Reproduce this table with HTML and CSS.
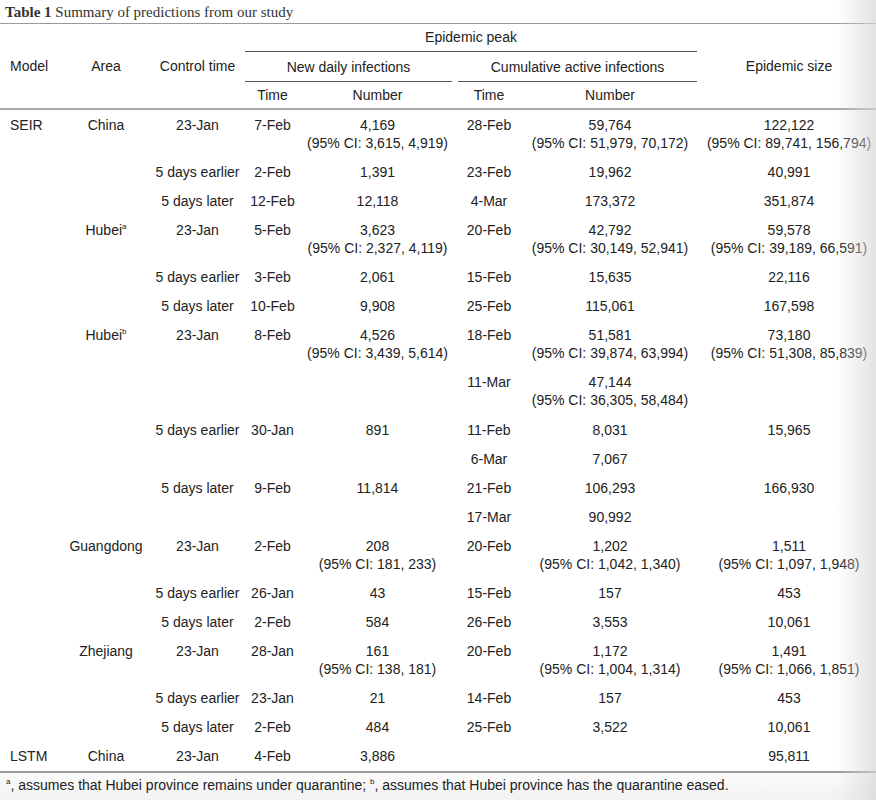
FILE: index.html
```html
<!DOCTYPE html>
<html>
<head>
<meta charset="utf-8">
<link rel="stylesheet" href="styles.css">
</head>
<body>
<div class="page">
  <div class="caption"><b>Table 1</b> Summary of predictions from our study</div>
  <table class="tbl">
    <colgroup>
      <col class="c-model"><col class="c-area"><col class="c-ctrl"><col class="c-t1"><col class="c-n1"><col class="c-t2"><col class="c-n2"><col class="c-size">
    </colgroup>
    <thead>
      <tr class="h1">
        <th rowspan="3" class="left">Model</th>
        <th rowspan="3">Area</th>
        <th rowspan="3">Control time</th>
        <th colspan="4" class="span-line">Epidemic peak</th>
        <th rowspan="3" class="size">Epidemic size</th>
      </tr>
      <tr class="h2">
        <th colspan="2" class="sub sub-l"><div class="sub-in">New daily infections</div></th>
        <th colspan="2" class="sub sub-r"><div class="sub-in">Cumulative active infections</div></th>
      </tr>
      <tr class="h3">
        <th>Time</th><th>Number</th><th>Time</th><th>Number</th>
      </tr>
    </thead>
    <tbody>
      <tr class="first"><td class="left">SEIR</td><td>China</td><td>23-Jan</td><td>7-Feb</td><td>4,169<br>(95% CI: 3,615, 4,919)</td><td>28-Feb</td><td>59,764<br>(95% CI: 51,979, 70,172)</td><td class="size">122,122<br>(95% CI: 89,741, 156,794)</td></tr>
      <tr><td></td><td></td><td>5 days earlier</td><td>2-Feb</td><td>1,391</td><td>23-Feb</td><td>19,962</td><td class="size">40,991</td></tr>
      <tr><td></td><td></td><td>5 days later</td><td>12-Feb</td><td>12,118</td><td>4-Mar</td><td>173,372</td><td class="size">351,874</td></tr>
      <tr><td></td><td>Hubei<sup>a</sup></td><td>23-Jan</td><td>5-Feb</td><td>3,623<br>(95% CI: 2,327, 4,119)</td><td>20-Feb</td><td>42,792<br>(95% CI: 30,149, 52,941)</td><td class="size">59,578<br>(95% CI: 39,189, 66,591)</td></tr>
      <tr><td></td><td></td><td>5 days earlier</td><td>3-Feb</td><td>2,061</td><td>15-Feb</td><td>15,635</td><td class="size">22,116</td></tr>
      <tr><td></td><td></td><td>5 days later</td><td>10-Feb</td><td>9,908</td><td>25-Feb</td><td>115,061</td><td class="size">167,598</td></tr>
      <tr><td></td><td>Hubei<sup>b</sup></td><td>23-Jan</td><td>8-Feb</td><td>4,526<br>(95% CI: 3,439, 5,614)</td><td>18-Feb</td><td>51,581<br>(95% CI: 39,874, 63,994)</td><td class="size">73,180<br>(95% CI: 51,308, 85,839)</td></tr>
      <tr class="tall"><td></td><td></td><td></td><td></td><td></td><td>11-Mar</td><td>47,144<br>(95% CI: 36,305, 58,484)</td><td class="size"></td></tr>
      <tr><td></td><td></td><td>5 days earlier</td><td>30-Jan</td><td>891</td><td>11-Feb</td><td>8,031</td><td class="size">15,965</td></tr>
      <tr><td></td><td></td><td></td><td></td><td></td><td>6-Mar</td><td>7,067</td><td class="size"></td></tr>
      <tr><td></td><td></td><td>5 days later</td><td>9-Feb</td><td>11,814</td><td>21-Feb</td><td>106,293</td><td class="size">166,930</td></tr>
      <tr><td></td><td></td><td></td><td></td><td></td><td>17-Mar</td><td>90,992</td><td class="size"></td></tr>
      <tr><td></td><td>Guangdong</td><td>23-Jan</td><td>2-Feb</td><td>208<br>(95% CI: 181, 233)</td><td>20-Feb</td><td>1,202<br>(95% CI: 1,042, 1,340)</td><td class="size">1,511<br>(95% CI: 1,097, 1,948)</td></tr>
      <tr><td></td><td></td><td>5 days earlier</td><td>26-Jan</td><td>43</td><td>15-Feb</td><td>157</td><td class="size">453</td></tr>
      <tr><td></td><td></td><td>5 days later</td><td>2-Feb</td><td>584</td><td>26-Feb</td><td>3,553</td><td class="size">10,061</td></tr>
      <tr><td></td><td>Zhejiang</td><td>23-Jan</td><td>28-Jan</td><td>161<br>(95% CI: 138, 181)</td><td>20-Feb</td><td>1,172<br>(95% CI: 1,004, 1,314)</td><td class="size">1,491<br>(95% CI: 1,066, 1,851)</td></tr>
      <tr><td></td><td></td><td>5 days earlier</td><td>23-Jan</td><td>21</td><td>14-Feb</td><td>157</td><td class="size">453</td></tr>
      <tr><td></td><td></td><td>5 days later</td><td>2-Feb</td><td>484</td><td>25-Feb</td><td>3,522</td><td class="size">10,061</td></tr>
      <tr class="last"><td class="left">LSTM</td><td>China</td><td>23-Jan</td><td>4-Feb</td><td>3,886</td><td></td><td></td><td class="size">95,811</td></tr>
    </tbody>
  </table>
  <div class="foot"><sup>a</sup>, assumes that Hubei province remains under quarantine; <sup>b</sup>, assumes that Hubei province has the quarantine eased.</div>
</div>
<div class="edge-shade"></div>
</body>
</html>
```
FILE: styles.css
```css
html, body {
  margin: 0;
  padding: 0;
  background: #ededed;
}
body {
  width: 876px;
  height: 800px;
  overflow: hidden;
  font-family: "Liberation Sans", Arial, sans-serif;
  color: #222;
}
.page {
  background: #fff;
}
.caption {
  font-family: "Liberation Serif", "Times New Roman", serif;
  font-size: 15px;
  line-height: 18px;
  padding: 3px 5px 2px;
  color: #333;
}
.caption b {
  font-weight: bold;
}
.tbl {
  width: 876px;
  table-layout: fixed;
  border-collapse: collapse;
  font-size: 14px;
  line-height: 18px;
  border-top: 1px solid #9a9a9a;
  border-bottom: 2px solid #9a9a9a;
}
.c-model { width: 62px; }
.c-area { width: 88px; }
.c-ctrl { width: 95px; }
.c-t1 { width: 55px; }
.c-n1 { width: 155px; }
.c-t2 { width: 68px; }
.c-n2 { width: 174px; }
.c-size { width: 179px; }

.tbl th {
  font-weight: normal;
  padding: 5px 0;
  text-align: center;
  vertical-align: middle;
  white-space: nowrap;
}
.tbl th.left, .tbl td.left {
  text-align: left;
  padding-left: 10px;
}
.tbl th.size, .tbl td.size {
  padding-left: 5px;
}
.tbl th.span-line {
  border-bottom: 1px solid #555;
  padding-top: 4px;
  padding-bottom: 5px;
}
.tbl th.sub {
  padding: 0;
  vertical-align: bottom;
}
.tbl th.sub-l { padding-right: 3px; }
.tbl th.sub-r { padding-left: 3px; }
.sub-in {
  padding: 6px 0 5px;
  border-bottom: 1px solid #555;
}
.tbl thead tr.h3 th {
  padding-top: 4px;
  padding-bottom: 4px;
}
.tbl thead {
  border-bottom: 2px solid #a8a8a8;
}
.tbl td {
  padding: 5px 0 6px;
  text-align: center;
  vertical-align: top;
  white-space: nowrap;
}
.tbl tr.first td {
  padding-top: 6px;
}
.tbl tr.tall td {
  padding-bottom: 7px;
}
.tbl tr.last td {
  padding-bottom: 6px;
}
.tbl sup, .foot sup {
  font-size: 8px;
  line-height: 0;
  vertical-align: 6px;
}
.foot {
  font-size: 14px;
  line-height: 18px;
  padding: 3px 6px 8px;
  background: linear-gradient(#fbfbfb, #f1f1f1);
  color: #222;
}
.edge-shade {
  position: fixed;
  top: 0;
  right: 0;
  width: 40px;
  height: 800px;
  pointer-events: none;
  background: linear-gradient(to right, rgba(225, 225, 225, 0), rgba(215, 215, 215, 0.7));
}
```
